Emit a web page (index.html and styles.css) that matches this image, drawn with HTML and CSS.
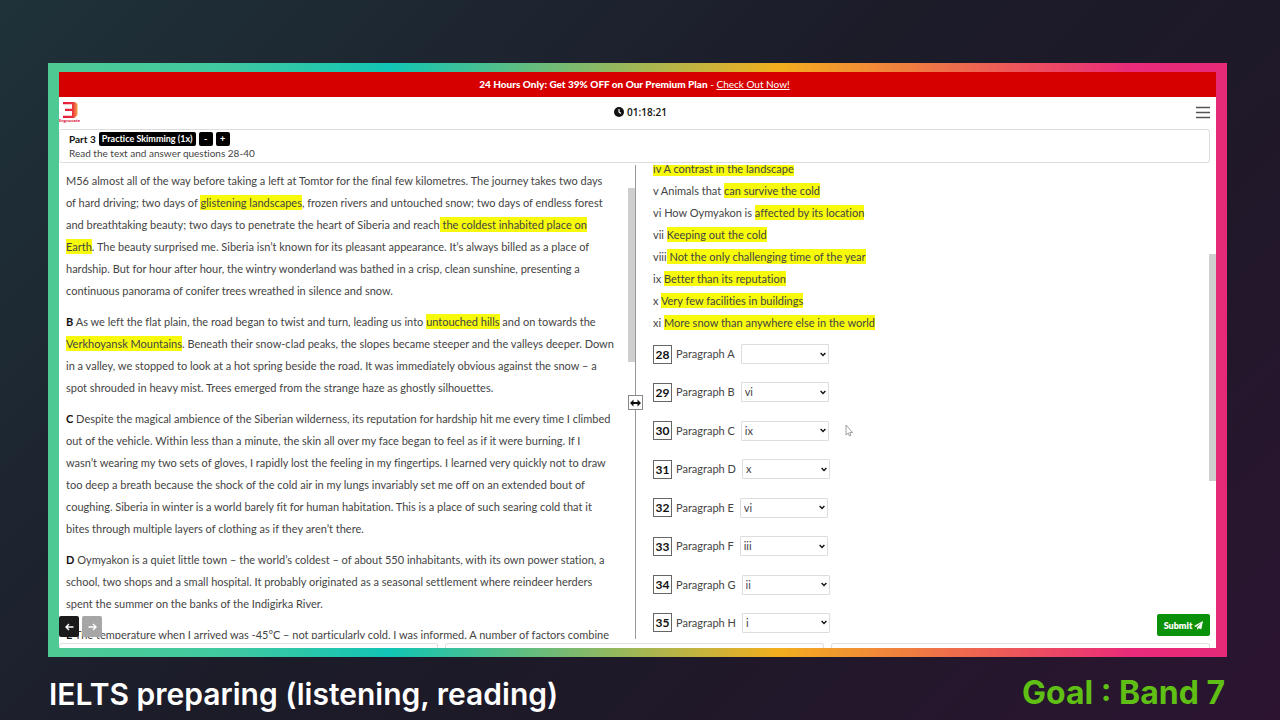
FILE: index.html
```html
<!DOCTYPE html>
<html lang="en">
<head>
<meta charset="utf-8">
<title>IELTS preparing</title>
<link rel="stylesheet" href="styles.css">
</head>
<body>
<main class="frame">
  <div class="app">
    <div class="banner"><strong>24 Hours Only: Get 39% OFF on Our Premium Plan</strong> - <a href="#">Check Out Now!</a></div>
    <header class="topbar">
      <a class="logo" href="#" aria-label="Engnovate">
        <svg width="22" height="23" viewBox="0 0 22 23">
          <defs><linearGradient id="lg" x1="0" x2="1"><stop offset="0" stop-color="#e5173c"/><stop offset=".65" stop-color="#e8303c"/><stop offset="1" stop-color="#f7a04a"/></linearGradient></defs>
          <path d="M4 1h12l2.500 2v11l-3 3H4v-2.300h9V10H6V7.700h7V3.300H4z" fill="url(#lg)"/>
          <text class="logo-text" x="0" y="21" fill="#dc1238">Engnovate</text>
        </svg>
      </a>
      <div class="timer">
        <svg width="10" height="10" viewBox="0 0 10 10"><circle cx="5" cy="5" r="5" fill="#111"/><path d="M5 2v3l2 1.400" fill="none" stroke="#fff" stroke-width="1.200"/></svg>
        <span>01:18:21</span>
      </div>
      <button class="menu" aria-label="Menu"><svg width="14" height="13" viewBox="0 0 14 13"><path d="M0 1.500h14M0 6.500h14M0 11.500h14" stroke="#555" stroke-width="1.700"/></svg></button>
    </header>
    <section class="part">
      <div class="part-row"><strong>Part 3</strong><button class="tag">Practice Skimming (1x)</button><button class="tag small">-</button><button class="tag small">+</button></div>
      <div>Read the text and answer questions 28-40</div>
    </section>
    <div class="panes">
      <article class="passage">
        <p>M56 almost all of the way before taking a left at Tomtor for the final few kilometres. The journey takes two days<br>of hard driving; two days of <mark>glistening landscapes</mark>, frozen rivers and untouched snow; two days of endless forest<br>and breathtaking beauty; two days to penetrate the heart of Siberia and reach<mark> the coldest inhabited place on</mark><br><mark>Earth</mark>. The beauty surprised me. Siberia isn’t known for its pleasant appearance. It’s always billed as a place of<br>hardship. But for hour after hour, the wintry wonderland was bathed in a crisp, clean sunshine, presenting a<br>continuous panorama of conifer trees wreathed in silence and snow.</p>
        <p><b>B</b> As we left the flat plain, the road began to twist and turn, leading us into <mark>untouched hills</mark> and on towards the<br><mark>Verkhoyansk Mountains</mark>. Beneath their snow-clad peaks, the slopes became steeper and the valleys deeper. Down<br>in a valley, we stopped to look at a hot spring beside the road. It was immediately obvious against the snow – a<br>spot shrouded in heavy mist. Trees emerged from the strange haze as ghostly silhouettes.</p>
        <p><b>C</b> Despite the magical ambience of the Siberian wilderness, its reputation for hardship hit me every time I climbed<br>out of the vehicle. Within less than a minute, the skin all over my face began to feel as if it were burning. If I<br>wasn’t wearing my two sets of gloves, I rapidly lost the feeling in my fingertips. I learned very quickly not to draw<br>too deep a breath because the shock of the cold air in my lungs invariably set me off on an extended bout of<br>coughing. Siberia in winter is a world barely fit for human habitation. This is a place of such searing cold that it<br>bites through multiple layers of clothing as if they aren’t there.</p>
        <p><b>D</b> Oymyakon is a quiet little town – the world’s coldest – of about 550 inhabitants, with its own power station, a<br>school, two shops and a small hospital. It probably originated as a seasonal settlement where reindeer herders<br>spent the summer on the banks of the Indigirka River.</p>
        <p><b>E</b> The temperature when I arrived was -45°C – not particularly cold, I was informed. A number of factors combine</p>
      </article>
      <div class="track left"><div class="thumb"></div></div>
      <div class="divider"><button class="handle" aria-label="Resize panes"><svg width="11" height="8" viewBox="0 0 11 8"><path d="M0 4l3.500-3.500V3h4V.5L11 4 7.500 7.500V5h-4v2.500z" fill="#111"/></svg></button></div>
      <section class="questions">
        <ul class="headings">
          <li><mark>iv A contrast in the landscape</mark></li>
          <li>v Animals that <mark>can survive the cold</mark></li>
          <li>vi How Oymyakon is <mark>affected by its location</mark></li>
          <li>vii <mark>Keeping out the cold</mark></li>
          <li>viii<mark> Not the only challenging time of the year</mark></li>
          <li>ix <mark>Better than its reputation</mark></li>
          <li>x <mark>Very few facilities in buildings</mark></li>
          <li>xi <mark>More snow than anywhere else in the world</mark></li>
        </ul>
        <div class="answers">
          <div class="answer"><b class="num">28</b><label for="q28">Paragraph A</label><select id="q28"><option></option></select></div>
          <div class="answer"><b class="num">29</b><label for="q29">Paragraph B</label><select id="q29"><option>vi</option></select></div>
          <div class="answer"><b class="num">30</b><label for="q30">Paragraph C</label><select id="q30"><option>ix</option></select></div>
          <div class="answer"><b class="num">31</b><label for="q31">Paragraph D</label><select id="q31"><option>x</option></select></div>
          <div class="answer"><b class="num">32</b><label for="q32">Paragraph E</label><select id="q32"><option>vi</option></select></div>
          <div class="answer"><b class="num">33</b><label for="q33">Paragraph F</label><select id="q33"><option>iii</option></select></div>
          <div class="answer"><b class="num">34</b><label for="q34">Paragraph G</label><select id="q34"><option>ii</option></select></div>
          <div class="answer"><b class="num">35</b><label for="q35">Paragraph H</label><select id="q35"><option>i</option></select></div>
        </div>
        <svg class="cursor" width="8" height="13" viewBox="0 0 8 13"><path d="M1 1v10l2.200-2 1.300 3 1.400-.6L4.700 8.500h2.800z" fill="#fff" stroke="#888" stroke-width=".8"/></svg>
      </section>
      <div class="track right"><div class="thumb"></div></div>
    </div>
    <div class="tabs"><div></div><div></div><div></div></div>
    <nav class="pager">
      <button class="prev" aria-label="Previous"><svg width="9" height="8" viewBox="0 0 9 8"><path d="M8.500 4H1M4 1L1 4l3 3" fill="none" stroke="#fff" stroke-width="1.400"/></svg></button>
      <button class="next" aria-label="Next"><svg width="9" height="8" viewBox="0 0 9 8"><path d="M.5 4H8M5 1l3 3-3 3" fill="none" stroke="#fff" stroke-width="1.400"/></svg></button>
    </nav>
    <button class="submit">Submit <svg width="9" height="9" viewBox="0 0 9 9"><path d="M9 0L0 5l2 1 5-4-4 4.500V9l1.500-1.700L7.300 8.300z" fill="#fff"/></svg></button>
  </div>
</main>
<footer class="caption"><span>IELTS preparing (listening, reading)</span><span class="goal">Goal : Band 7</span></footer>
</body>
</html>
```
FILE: styles.css
```css
* { box-sizing: border-box; }
body {
  margin: 0;
  min-height: 100vh;
  padding: 63px 53px 0 48px;
  display: flex;
  flex-direction: column;
  background: linear-gradient(135deg, #1f3239 0%, #1c1c29 45%, #1e1928 65%, #2c1431 100%);
  font-family: Lato, "Open Sans", sans-serif;
  font-size: 11px;
  font-variant-ligatures: none;
  color: #444;
}
button { font: inherit; border: 0; padding: 0; margin: 0; }
svg { display: block; }
.frame {
  padding: 9px 11px;
  background: linear-gradient(90deg, #4fc994 0%, #40c9a0 15%, #12c5b5 29%, #f3ae1e 62%, #ea2a7a 92%, #e62a78 100%);
}
.app { position: relative; background: #fff; }
.banner {
  height: 25px;
  line-height: 25px;
  text-align: center;
  background: #d60000;
  color: #fff;
  font-size: 10px;
  padding-right: 6px;
}
.banner strong { font-weight: 900; }
.banner a { color: #fff; }
.topbar {
  height: 32px;
  padding: 0 6px 2px 0;
  display: grid;
  grid-template-columns: 1fr auto 1fr;
  align-items: center;
}
.logo { justify-self: start; }
.logo-text { font: bold 4px "Open Sans", sans-serif; }
.timer { display: flex; align-items: center; gap: 3px; padding-left: 12px; color: #111; font: 600 10px "Open Sans", sans-serif; }
.menu { justify-self: end; background: none; }
.part {
  margin-right: 6px;
  height: 34px;
  padding: 2px 9px;
  border: 1px solid #ddd;
  border-left-color: #eee;
  border-radius: 3px;
  font-size: 10px;
  line-height: 14px;
}
.part-row { display: flex; align-items: center; gap: 3px; color: #111; }
.tag {
  height: 14px;
  padding: 0 3px;
  border-radius: 2px;
  background: #000;
  color: #fff;
  font-size: 9px;
  font-weight: 700;
  line-height: 14px;
}
.tag.small { width: 14px; padding: 0; }
.panes {
  height: 474px;
  margin-top: 2px;
  display: grid;
  grid-template-columns: 569fr 7px 1px 573fr 7px;
  line-height: 22px;
}
.passage { overflow: hidden; padding: 5px 0 0 7px; white-space: nowrap; }
.passage p { margin: 0 0 9px; }
.passage b { color: #111; }
mark { background: #f7fb0b; color: inherit; padding: 1px 0; }
.track.left { padding-top: 23px; }
.track.right { padding-top: 89px; }
.thumb { background: #cfcfcf; height: 174px; }
.right .thumb { height: 227px; }
.divider { position: relative; background: #999; }
.handle {
  position: absolute;
  left: -7px;
  top: 230px;
  width: 15px;
  height: 15px;
  border: 1px solid #888;
  background: #fff;
  display: flex;
  align-items: center;
  justify-content: center;
}
.questions { position: relative; overflow: hidden; padding-left: 17px; }
.headings { list-style: none; margin: -7px 0 0; padding: 0; }
.answers { height: 289px; margin-top: 10px; display: flex; flex-direction: column; justify-content: space-between; }
.answer { display: flex; align-items: center; height: 20px; }
.num {
  width: 19px;
  height: 19px;
  margin-right: 4px;
  border: 1px solid #666;
  color: #111;
  font-size: 12px;
  line-height: 17px;
  text-align: center;
}
.answer select {
  width: 88px;
  height: 20px;
  margin-left: 6px;
  padding: 0 12px 0 3px;
  border: 1px solid #ddd;
  border-radius: 1px;
  appearance: none;
  background: #fff url("data:image/svg+xml,%3Csvg xmlns='http://www.w3.org/2000/svg' width='6' height='5' viewBox='0 0 6 5'%3E%3Cpath d='M.6 1L3 3.500 5.400 1' fill='none' stroke='%23111' stroke-width='1.400'/%3E%3C/svg%3E") no-repeat right 2px center;
  color: #444;
  font: inherit;
  line-height: 18px;
}
.cursor { position: absolute; left: 209px; top: 259px; }
.tabs { height: 9px; padding: 4px 6px 0 0; display: grid; grid-template-columns: 1fr 1fr 1fr; gap: 7px; }
.tabs div { border: 1px solid #e6dde0; border-bottom: 0; border-radius: 3px 3px 0 0; }
.pager { position: absolute; left: 0; bottom: 11px; display: flex; gap: 3px; }
.pager button { width: 20px; height: 21px; border-radius: 2px; display: flex; align-items: center; justify-content: center; }
.prev { background: #1b1b1b; }
.next { background: #a6a6a6; }
.submit {
  position: absolute;
  right: 6px;
  bottom: 12px;
  width: 53px;
  height: 22px;
  border-radius: 2px;
  background: #0a930a;
  color: #fff;
  font-size: 9px;
  font-weight: 800;
  display: flex;
  align-items: center;
  justify-content: center;
  gap: 2px;
}
.caption {
  padding: 17px 2px 0 1px;
  display: flex;
  justify-content: space-between;
  font: 600 30px/40px Inter, sans-serif;
  color: #fff;
}
.goal { color: #5fbf14; font-size: 32px; font-weight: 700; line-height: 38px; }
```
